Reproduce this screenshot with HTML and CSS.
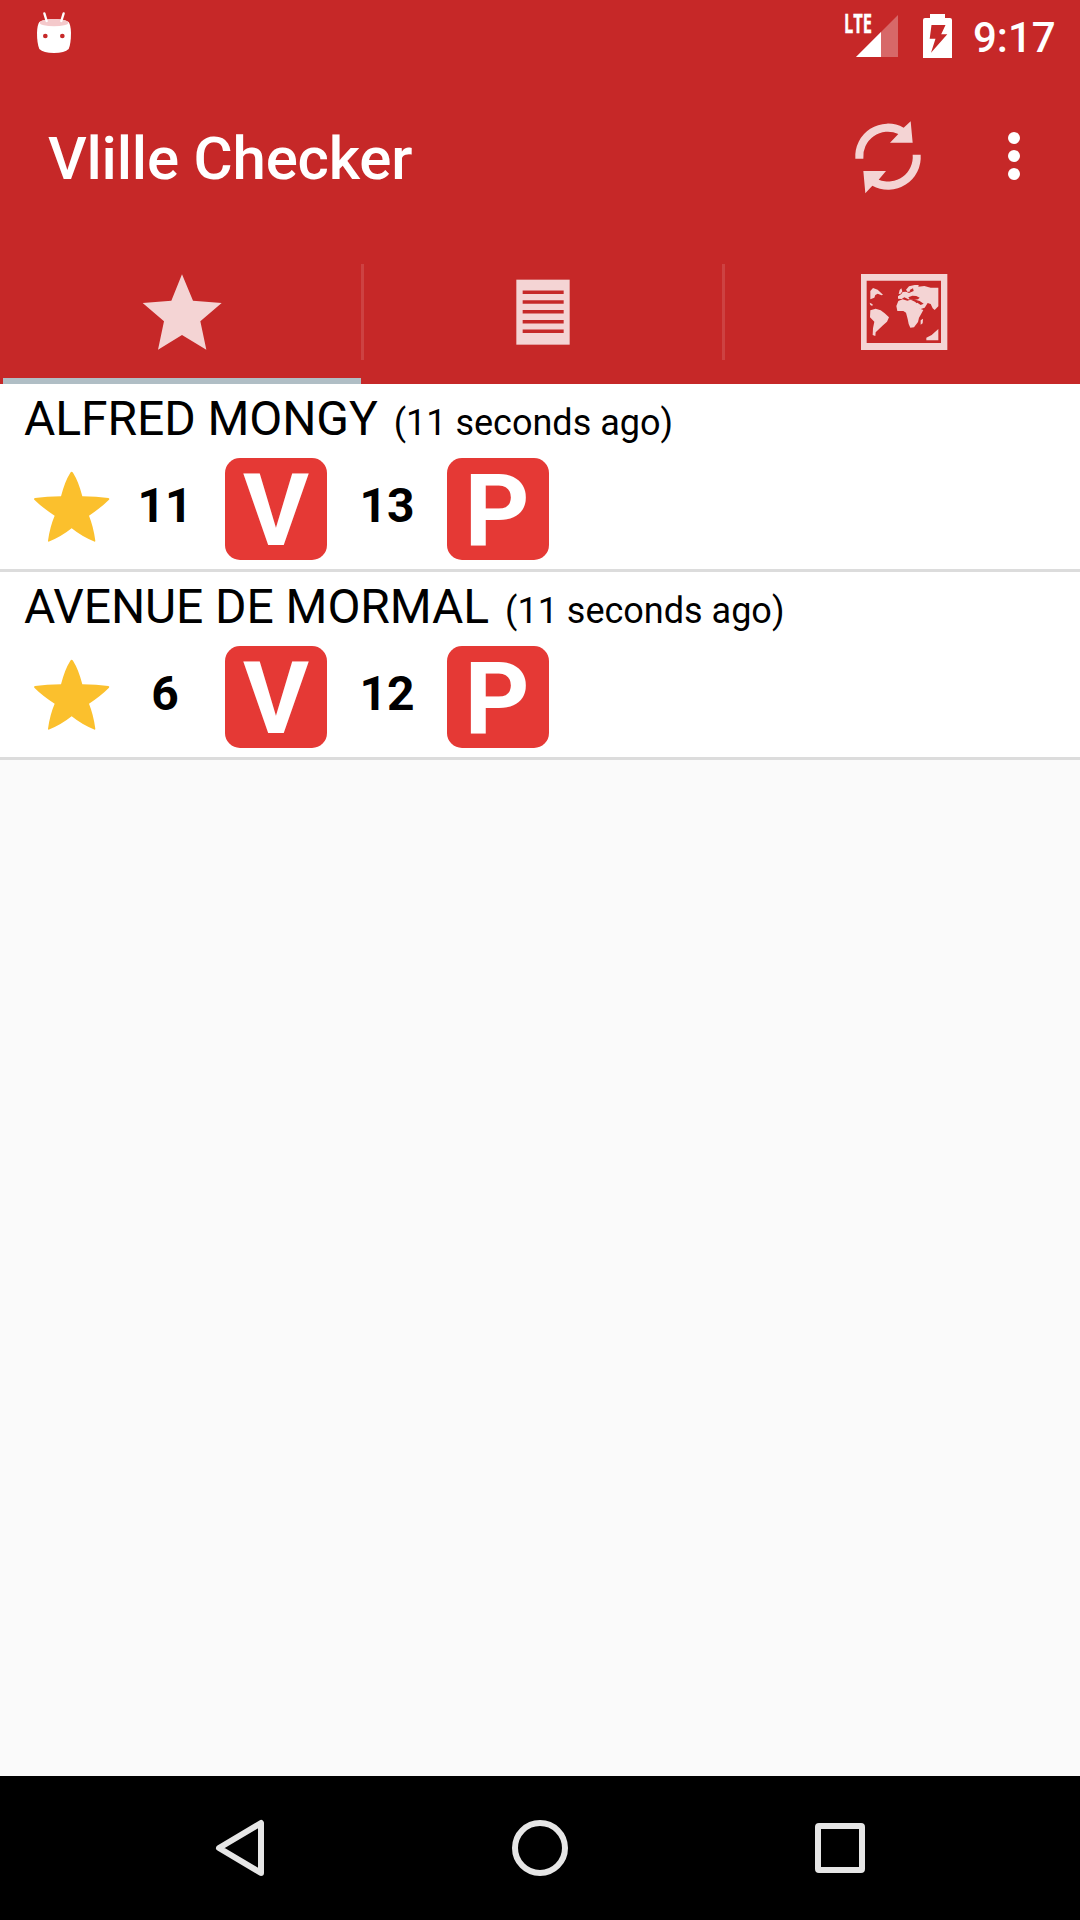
FILE: index.html
```html
<!DOCTYPE html>
<html lang="en">
<head>
<meta charset="utf-8">
<title>Vlille Checker</title>
<link rel="stylesheet" href="styles.css">
</head>
<body>
<div class="screen">
  <header class="header">
    <div class="status">
      <svg class="status-app" width="36" height="42" viewBox="108 36 108 126">
        <path fill="#fff" d="M118 66Q112 74 111 98Q111 130 118 147Q130 159 162 159Q194 159 206 147Q213 130 213 98Q212 74 206 66Q190 57 162 57Q134 57 118 66Z"/>
        <ellipse cx="162" cy="68" rx="43" ry="11" fill="#f4c9cb"/>
        <path d="M133 40L140 63M191 40L184 63" stroke="#fff" stroke-width="7" stroke-linecap="round"/>
        <circle cx="136" cy="108" r="7" fill="#c62828"/><circle cx="187" cy="108" r="7" fill="#c62828"/>
      </svg>
      <div class="status-right">
        <svg class="signal" width="60" height="58" viewBox="838 0 60 58">
          <path d="M856 57L898 15V57Z" fill="#fff" fill-opacity=".3"/>
          <path d="M856 57L881 32V57Z" fill="#fff"/>
          <text class="lte" x="844" y="33.300" textLength="28" lengthAdjust="spacingAndGlyphs">LTE</text>
        </svg>
        <svg class="battery" width="29" height="44" viewBox="923 14 29 44">
          <path fill="#fff" fill-rule="evenodd" d="M930 14H945V18H950Q952 18 952 20V58H923V20Q923 18 925 18H930ZM931.5 25H945.5L941.2 34.3H947.3L931 52.7L935.5 38.7H929.7Z"/>
        </svg>
        <span class="clock">9:17</span>
      </div>
    </div>
    <div class="toolbar">
      <h1 class="title">Vlille Checker</h1>
      <div class="actions">
        <svg class="refresh" width="66" height="73" viewBox="76 63 198 219" fill="#f4d4d4">
          <path d="M77 176A98 98 0 0 1 222 83L243 64L249 128H181L206 102A74 74 0 0 0 101 176Z"/>
          <path d="M273 164A98 98 0 0 1 128 257L107 280L101 213H169L147 239A74 74 0 0 0 249 164Z"/>
        </svg>
        <svg width="12" height="48" viewBox="0 0 12 48" fill="#fff">
          <circle cx="6" cy="6" r="6"/><circle cx="6" cy="24" r="6"/><circle cx="6" cy="42" r="6"/>
        </svg>
      </div>
    </div>
    <nav class="tabs">
      <div class="tab tab-active">
        <svg width="80" height="78" viewBox="426 69 240 234" fill="#f4d4d4">
          <path d="M546 73L579 152L665 159L601 214L619 299L546 255L474 299L492 214L428 159L514 152Z"/>
        </svg>
      </div>
      <div class="divider"></div>
      <div class="tab">
        <svg width="54" height="66" viewBox="108 87 162 198">
          <rect x="109" y="89" width="160" height="195" fill="#f4d4d4"/>
          <path d="M128 127H251M128 156H251M128 185.500H251M128 215H251M128 244H251" stroke="#c62828" stroke-width="10.500"/>
        </svg>
      </div>
      <div class="divider"></div>
      <div class="tab">
        <svg width="88" height="78" viewBox="60 69 264 234" fill="#f4d4d4">
          <path fill-rule="evenodd" d="M63 72H322V300H63ZM80 92V279H303V92Z"/>
          <path d="M91 123L99 114L113 119L129 134L125 136L113 131L106 135L103 143L91 148Z"/>
          <path d="M89 158L98 163L97 168L91 165Z"/>
          <path d="M91 181L107 176L122 181L134 190L147 202L141 215L129 226L118 236L107 247L106 258L98 255L99 235L103 215L90 202Z"/>
          <path d="M169 168L175 153L188 148L202 152L212 149L225 155L236 165L240 176L250 180L243 193L237 203L234 216L222 232L211 233L206 222L203 207L198 188L190 183H172Z"/>
          <path d="M174 139L184 132L188 126L198 125L207 129L221 123L219 115L209 120L211 124L203 126L198 119L207 109L224 105L236 105L235 110L253 108L272 113H295V169L284 180L278 175L272 162L263 159L254 173L240 178L228 161L232 158L242 165L251 161L239 153L226 149L205 148L193 142L185 147L174 146Z"/>
          <path d="M179 120L184 115L187 124L182 131L176 132ZM242 211L249 206L248 220L242 224ZM295 237V271H259V263L275 255Z"/>
          <path fill="#c62828" d="M205 142L217 137L229 138L239 143L234 148L221 150L209 148Z"/>
        </svg>
      </div>
    </nav>
  </header>

  <main class="list">
    <section class="station">
      <div class="station-head"><span class="name">ALFRED MONGY</span><span class="ago">(11 seconds ago)</span></div>
      <div class="station-body">
        <svg class="star" width="81" height="72" viewBox="72 271 243 216"><path d="M211 276Q215 270 219 276Q236 303 247 347Q290 347 325 352Q330 354 327 357Q303 381 267 405Q280 437 286 480Q286 485 281 482Q245 467 215 443Q185 467 149 482Q144 485 144 480Q150 437 164 405Q127 381 103 357Q100 354 105 352Q140 347 183 347Q194 303 211 276Z" fill="#fbc02d"/></svg>
        <span class="count">11</span><span class="badge">V</span>
        <span class="count">13</span><span class="badge badge-park">P</span>
      </div>
    </section>
    <section class="station">
      <div class="station-head"><span class="name">AVENUE DE MORMAL</span><span class="ago">(11 seconds ago)</span></div>
      <div class="station-body">
        <svg class="star" width="81" height="72" viewBox="72 271 243 216"><path d="M211 276Q215 270 219 276Q236 303 247 347Q290 347 325 352Q330 354 327 357Q303 381 267 405Q280 437 286 480Q286 485 281 482Q245 467 215 443Q185 467 149 482Q144 485 144 480Q150 437 164 405Q127 381 103 357Q100 354 105 352Q140 347 183 347Q194 303 211 276Z" fill="#fbc02d"/></svg>
        <span class="count">6</span><span class="badge">V</span>
        <span class="count">12</span><span class="badge badge-park">P</span>
      </div>
    </section>
  </main>

  <footer class="navbar">
    <svg width="60" height="60" viewBox="210 1818 60 60"><path d="M219 1848L261 1823V1873Z"/></svg>
    <svg width="60" height="60" viewBox="510 1818 60 60"><circle cx="540" cy="1848" r="25"/></svg>
    <svg width="60" height="60" viewBox="810 1818 60 60"><rect x="818" y="1826" width="44" height="44" rx="1"/></svg>
  </footer>
</div>
</body>
</html>
```
FILE: styles.css
```css
* { box-sizing: border-box; }

body {
  margin: 0;
  font-family: Roboto, "Liberation Sans", sans-serif;
  color: #000;
}

svg { display: block; flex: none; overflow: visible; }

.screen {
  display: flex;
  flex-direction: column;
  width: 1080px;
  height: 1920px;
  overflow: hidden;
  background: #fafafa;
}

.header { background: #c62828; color: #fff; }

.status {
  display: flex;
  justify-content: space-between;
  height: 72px;
  padding: 0 23px 0 36px;
}

.status-app { margin-top: 12px; }
.status-right { display: flex; }
.battery { margin: 14px 0 0 25px; }

.lte {
  font: 700 26px "Open Sans", sans-serif;
  fill: #fff;
  stroke: #fff;
  stroke-width: .4px;
}

.clock {
  width: 84px;
  margin-left: 21px;
  font-size: 42px;
  font-weight: 500;
  line-height: 75px;
  white-space: nowrap;
}

.toolbar {
  display: flex;
  align-items: center;
  justify-content: space-between;
  height: 168px;
  padding: 0 60px 0 48px;
}

.title {
  margin: 0;
  padding-top: 5px;
  font-size: 60px;
  font-weight: 500;
  line-height: 72px;
  letter-spacing: -.2px;
}

.actions { display: flex; align-items: center; gap: 87px; }
.refresh { margin-top: 2px; }

.tabs {
  display: flex;
  height: 144px;
  padding-left: 3px;
  overflow: hidden;
}

.tab {
  display: flex;
  flex: none;
  align-items: center;
  justify-content: center;
  width: 358px;
  border-bottom: 6px solid transparent;
  padding-top: 6px;
}

.tab-active { border-bottom-color: #b0bec5; }

.divider {
  flex: none;
  width: 3px;
  height: 96px;
  margin-top: 24px;
  background: rgba(255, 255, 255, .12);
}

.list { flex: 1; }

.station {
  height: 188px;
  background: #fff;
  border-bottom: 3px solid #dcdcdc;
}

.station-head {
  display: flex;
  align-items: baseline;
  gap: 16px;
  height: 74px;
  padding-left: 24px;
  line-height: 69px;
}

.name { font-size: 48px; letter-spacing: -.08px; }
.ago { font-size: 36px; }

.station-body {
  display: flex;
  height: 102px;
  padding-left: 24px;
}

.star { margin-top: 13px; }

.count {
  width: 120px;
  font-size: 48px;
  font-weight: 700;
  line-height: 96px;
  text-align: center;
}

.badge {
  width: 102px;
  height: 102px;
  border-radius: 15px;
  background: #e53935;
  color: #fff;
  font-size: 101px;
  font-weight: 700;
  line-height: 105px;
  text-align: center;
}

.badge-park { padding-right: 2px; }

.navbar {
  display: flex;
  align-items: center;
  justify-content: space-between;
  height: 144px;
  padding: 0 210px;
  background: #000;
}

.navbar svg {
  fill: none;
  stroke: #e6e6e6;
  stroke-width: 6;
  stroke-linejoin: round;
}
```
